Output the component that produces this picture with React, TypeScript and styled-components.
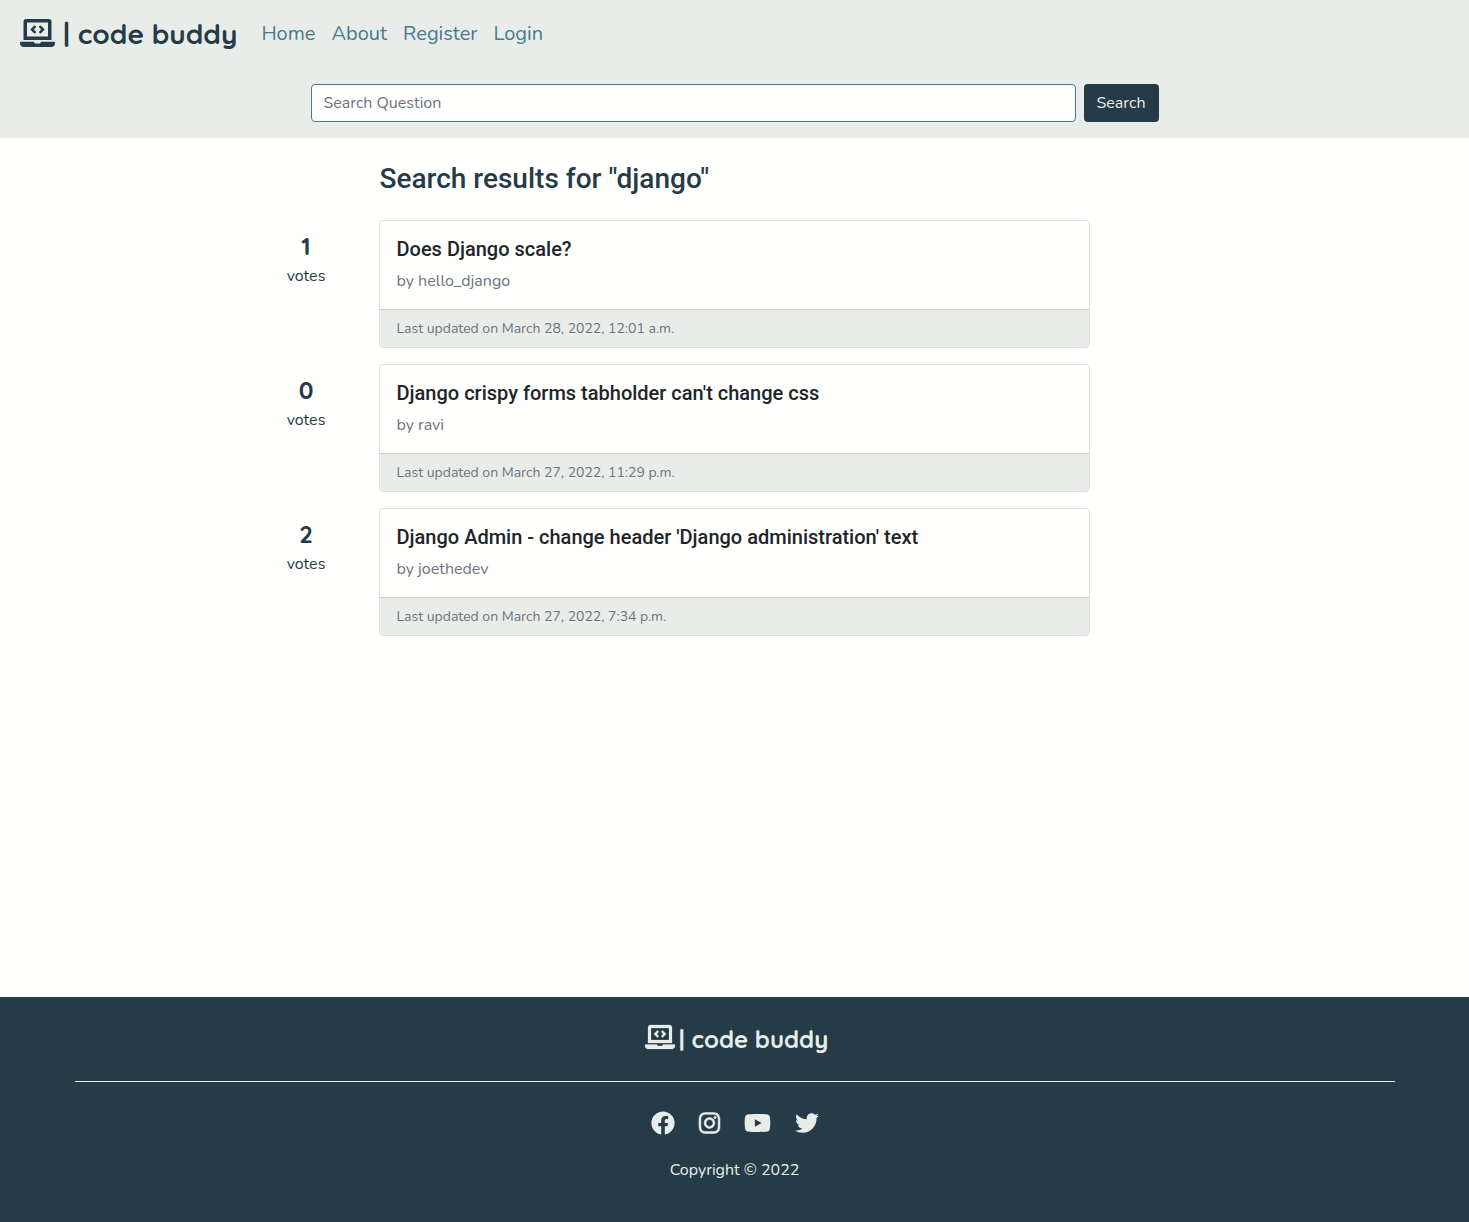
import React from "react";
import styled, { createGlobalStyle } from "styled-components";
import { FaFacebook, FaInstagram, FaLaptopCode, FaTwitter, FaYoutube } from "react-icons/fa";

const dark = "#253b48";
const mist = "#e8ede9";
const teal = "#457b90";
const muted = "#6c757d";
const paper = "#fffffe";

const GlobalStyle = createGlobalStyle`
  * { box-sizing: border-box; }
  body {
    margin: 0;
    background: ${paper};
    color: ${dark};
    font-family: Nunito, Lato, sans-serif;
    font-size: 16px;
    line-height: 24px;
  }
`;

const Page = styled.div`
  display: flex;
  flex-direction: column;
  min-height: 1222px;
`;

const Header = styled.header`
  height: 138px;
  background: ${mist};
`;

const Nav = styled.nav`
  display: flex;
  align-items: center;
  height: 68px;
  padding-left: 20px;
`;

const Brand = styled.a<{ $size: number; $gap: number }>`
  display: flex;
  align-items: center;
  gap: ${(p) => p.$gap}px;
  font-family: Quicksand, Lato, sans-serif;
  font-weight: 700;
  font-size: ${(p) => p.$size}px;
  line-height: 1.25;
  white-space: nowrap;
  color: inherit;
  text-decoration: none;
`;

const HeaderBrand = styled(Brand)`
  margin-bottom: 2px;
`;

const FooterBrand = styled(Brand)`
  margin-left: 4px;
`;

const Glyph = styled.span<{ $w: number; $h: number; $lift?: number; $stroke?: number }>`
  display: flex;
  margin-bottom: ${(p) => p.$lift ?? 0}px;
  svg {
    width: ${(p) => p.$w}px;
    height: ${(p) => p.$h}px;
    stroke-width: ${(p) => p.$stroke ?? 0};
    overflow: visible;
  }
`;

const NavLinks = styled.div`
  display: flex;
  gap: 16px;
  margin-left: 24px;
`;

const NavLink = styled.a`
  font-size: 20px;
  line-height: 30px;
  white-space: nowrap;
  color: ${teal};
  text-decoration: none;
`;

const SearchForm = styled.form`
  display: flex;
  gap: 8px;
  width: 848px;
  margin: 16px auto 0 311px;
`;

const SearchInput = styled.input`
  flex: 1;
  height: 38px;
  padding: 6px 11.5px;
  border: 1px solid ${teal};
  border-radius: 4px;
  background: ${paper};
  font: inherit;
  outline: none;
  &::placeholder { color: ${muted}; opacity: 1; }
`;

const SearchButton = styled.button`
  width: 75px;
  height: 38px;
  padding: 0 1px 0 0;
  border: 0;
  border-radius: 4px;
  background: ${dark};
  color: ${mist};
  font: inherit;
`;

const Main = styled.main`
  flex: 1;
  width: 857px;
  margin-left: 233px;
  padding-top: 24px;
`;

const Title = styled.h1`
  margin: 0 0 24px 146.5px;
  font-family: Roboto, sans-serif;
  font-weight: 500;
  font-size: 28px;
  line-height: 34px;
`;

const Result = styled.article`
  display: grid;
  grid-template-columns: 146px 711px;
  margin-bottom: 16px;
`;

const Votes = styled.div`
  padding-top: 12px;
  text-align: center;
`;

const VoteCount = styled.div`
  font-family: Quicksand, Lato, sans-serif;
  font-weight: 700;
  font-size: 24px;
  line-height: 28px;
  margin-bottom: 4px;
`;

const Card = styled.div`
  height: 128px;
  border: 1px solid #dddfde;
  border-radius: 4px;
  overflow: hidden;
`;

const CardBody = styled.div`
  height: 88px;
  padding: 16px 16.5px;
`;

const CardTitle = styled.h2`
  margin: 0 0 8px;
  font-family: Roboto, sans-serif;
  font-weight: 500;
  font-size: 20px;
  line-height: 24px;
  color: #212529;
`;

const Author = styled.div`
  color: ${muted};
`;

const CardFooter = styled.div`
  height: 38px;
  padding: 8px 16.5px;
  border-top: 1px solid #c9cdcb;
  background: ${mist};
  color: ${muted};
  font-size: 14px;
  line-height: 21px;
`;

const Footer = styled.footer`
  display: flex;
  flex-direction: column;
  align-items: center;
  height: 225px;
  padding-top: 27px;
  background: ${dark};
  color: ${mist};
`;

const Rule = styled.hr`
  width: 1320px;
  height: 1px;
  margin: 27px 0 29px;
  border: 0;
  background: ${mist};
`;

const Socials = styled.div`
  display: flex;
  gap: 24px;
  margin-bottom: 23px;
`;

const Copyright = styled.div`
  font-size: 16px;
`;

const links = ["Home", "About", "Register", "Login"];

const results = [
  { votes: 1, title: "Does Django scale?", author: "hello_django", updated: "March 28, 2022, 12:01 a.m." },
  { votes: 0, title: "Django crispy forms tabholder can't change css", author: "ravi", updated: "March 27, 2022, 11:29 p.m." },
  { votes: 2, title: "Django Admin - change header 'Django administration' text", author: "joethedev", updated: "March 27, 2022, 7:34 p.m." },
];

export default function App() {
  return (
    <Page>
      <GlobalStyle />
      <Header>
        <Nav>
          <HeaderBrand $size={28} $gap={8}>
            <Glyph $w={35} $h={28}><FaLaptopCode /></Glyph>
            <span>| code buddy</span>
          </HeaderBrand>
          <NavLinks>
            {links.map((label) => (
              <NavLink key={label}>{label}</NavLink>
            ))}
          </NavLinks>
        </Nav>
        <SearchForm>
          <SearchInput placeholder="Search Question" />
          <SearchButton type="button">Search</SearchButton>
        </SearchForm>
      </Header>
      <Main>
        <Title>Search results for "django"</Title>
        {results.map((r) => (
          <Result key={r.title}>
            <Votes>
              <VoteCount>{r.votes}</VoteCount>
              votes
            </Votes>
            <Card>
              <CardBody>
                <CardTitle>{r.title}</CardTitle>
                <Author>by {r.author}</Author>
              </CardBody>
              <CardFooter>Last updated on {r.updated}</CardFooter>
            </Card>
          </Result>
        ))}
      </Main>
      <Footer>
        <FooterBrand $size={24} $gap={4}>
          <Glyph $w={30} $h={24} $lift={4} $stroke={5}><FaLaptopCode /></Glyph>
          <span>| code buddy</span>
        </FooterBrand>
        <Rule />
        <Socials>
          <Glyph $w={24} $h={24}><FaFacebook /></Glyph>
          <Glyph $w={21} $h={24} $stroke={12}><FaInstagram /></Glyph>
          <Glyph $w={27} $h={24}><FaYoutube /></Glyph>
          <Glyph $w={24} $h={24}><FaTwitter /></Glyph>
        </Socials>
        <Copyright>Copyright © 2022</Copyright>
      </Footer>
    </Page>
  );
}
